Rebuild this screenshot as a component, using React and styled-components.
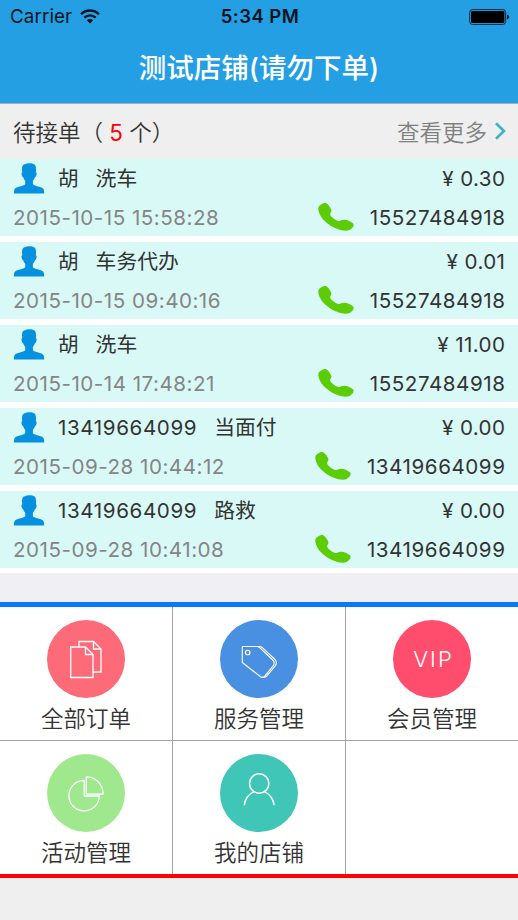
import React from 'react';
import styled, { createGlobalStyle } from 'styled-components';

const Global = createGlobalStyle`
  * { box-sizing: border-box; }
  body { margin: 0; background: #efefef; }
`;

const Screen = styled.div`
  width: 518px;
  height: 920px;
  overflow: hidden;
  display: flex;
  flex-direction: column;
  background: #efefef;
  color: #333;
  font-family: Inter, "Noto Sans CJK SC", sans-serif;
  white-space: pre;
`;

const Header = styled.header`
  flex: none;
  height: 104px;
  background: #259fe3;
  border-bottom: 1px solid #9faeb8;
`;

const StatusBar = styled.div`
  height: 33px;
  display: grid;
  grid-template-columns: 1fr auto 1fr;
  align-items: center;
  padding: 0 8px 0 10px;
  color: #06141d;
  font-size: 18.8px;
  line-height: 33px;
`;

const Carrier = styled.div`
  display: flex;
  align-items: center;
  gap: 8px;
  letter-spacing: 0.1px;
`;

const Clock = styled.div`
  font-weight: 600;
  font-size: 18.5px;
  letter-spacing: 0.45px;
`;

const BatterySlot = styled.div`
  display: flex;
  justify-content: flex-end;
`;

const Title = styled.h1`
  margin: 0;
  height: 70px;
  line-height: 71px;
  text-align: center;
  color: #fff;
  font-size: 27.5px;
  font-weight: 500;
`;

const SectionHead = styled.div`
  flex: none;
  height: 55px;
  padding: 0 11px 2px 13px;
  display: flex;
  align-items: center;
  justify-content: space-between;
  font-size: 22.5px;
  font-weight: 350;
`;

const Count = styled.span`
  color: #f00;
  font-weight: 400;
`;

const More = styled.div`
  display: flex;
  align-items: center;
  gap: 7px;
  color: #808080;
`;

const Orders = styled.div`
  flex: none;
  height: 414px;
  display: grid;
  grid-auto-rows: 77px;
  row-gap: 6px;
  background: #fff;
`;

const Order = styled.article`
  background: #d9f9f6;
  padding: 0 13px;
  font-size: 20.6px;
  font-weight: 380;
`;

const Line = styled.div`
  height: ${(p) => p.$h}px;
  display: flex;
  align-items: center;
  justify-content: space-between;
`;

const Customer = styled.div`
  display: flex;
  align-items: center;
`;

const Name = styled.span`
  margin-left: 13px;
  ${(p) => (p.$numeric ? 'letter-spacing: 0.6px;' : 'padding-bottom: 3px;')}
`;

const Service = styled.span`
  margin-left: 17px;
  padding-bottom: 3px;
  font-size: 20.8px;
`;

const Price = styled.span`
  letter-spacing: 0.4px;
  margin-right: -0.4px;
`;

const Stamp = styled.time`
  color: #858585;
  letter-spacing: 0.5px;
`;

const Phone = styled.div`
  display: flex;
  align-items: center;
  gap: 16px;
  letter-spacing: 0.55px;
  margin-right: -0.5px;
`;

const Spacer = styled.div`
  flex: none;
  height: 29px;
  background: #efeff4;
`;

const Menu = styled.nav`
  flex: none;
  height: 276px;
  display: grid;
  grid-template-columns: 172px 172px 172px;
  grid-template-rows: 133px 133px;
  gap: 1px;
  background: #a2a2a2;
  border-top: 5px solid #0a78fb;
  border-bottom: 4px solid #f00;
`;

const Tile = styled.div`
  background: #fff;
  display: flex;
  flex-direction: column;
  align-items: center;
  padding-top: 13px;
  font-size: 22.5px;
  font-weight: 350;
  line-height: 42px;
`;

const Disc = styled.div`
  flex: none;
  width: 78px;
  height: 78px;
  border-radius: 50%;
  background: ${(p) => p.$color};
  display: flex;
  align-items: center;
  justify-content: center;
`;

const Vip = styled.span`
  color: #fff;
  font-size: 22px;
  font-weight: 300;
  letter-spacing: 2px;
  margin-right: -3px;
`;

const Wifi = () => (
  <svg width="20" height="15" viewBox="0 0 20 15" fill="none" stroke="#06141d" strokeWidth="2.3">
    <path d="M1 5.2a12.8 12.8 0 0 1 18 0" />
    <path d="M4.4 8.6a8 8 0 0 1 11.2 0" />
    <path d="M10 14.4 6.8 11.2a4.6 4.6 0 0 1 6.4 0Z" fill="#06141d" stroke="none" />
  </svg>
);

const Battery = () => (
  <svg width="41" height="16" viewBox="0 0 41 16">
    <rect x="0.7" y="0.6" width="36" height="14.8" rx="2.8" fill="none" stroke="#0b2b3e" strokeWidth="1" />
    <rect x="2" y="1.9" width="33.4" height="12.2" rx="1.4" fill="#000" />
    <path d="M38 5.4q2.2.7 2.2 2.6T38 10.6Z" fill="#06141d" />
  </svg>
);

const Chevron = () => (
  <svg width="13" height="18" viewBox="0 0 13 18" fill="none" stroke="#3fb2c6" strokeWidth="2.6">
    <path d="M2 1.2 10 9 2 16.8" />
  </svg>
);

const Person = () => (
  <svg width="32" height="31" viewBox="0 0 32 31" fill="#0591e0">
    <path d="M9 5.2C9 2.8 10.3 1.4 12 1.2 14.3-.2 19.2-.2 21.5 1.4 23 2.5 23.2 5 22.9 9.2c1 .3.9 1.7.3 3.3-.3 1-.7 1.6-1.2 1.6-.5 1.8-1.3 2.900-2.100 3.900v3.200c1.500 2.300 9.200 2.200 10.700 5 .5 1.100.6 2.500.6 4.300H.900c0-1.800.1-3.200.600-4.300 1.500-2.800 9.200-2.700 10.700-5V18c-.8-1-1.600-2.100-2.100-3.900-.5 0-.9-.6-1.200-1.600-.6-1.600-.7-3 .3-3.300Z" />
  </svg>
);

const Handset = () => (
  <svg width="36" height="28" viewBox="0 0 36 28" fill="#5bcc05">
    <path d="M.3 5.2C.3 2.5 5.400-.5 7.800.1 9.600.8 12 4 13.200 6.500c.9 2.100-1.400 3.400-1 5.200.6 2 4.800 5.300 8 6.200 2.600.6 3.300-1.200 6-1.100 2.800.2 6.500 1.500 8.700 3.500 2.100 2.200-.7 5.500-3.400 6.700-2.400 1.100-7.400.8-11.800-.9C12.400 23.400 5.800 18.200 2.800 13.200 1.200 10.500.2 7.300.3 5.200Z" />
  </svg>
);

const line = { fill: 'none', stroke: '#fff', strokeWidth: 1.3 };

const Papers = () => (
  <svg width="78" height="78" viewBox="0 0 78 78" {...line}>
    <path d="M32 27V21.500h14.500l7.500 7.500V52h-8" />
    <path d="M46.500 21.500V29H54" />
    <path d="M23.700 27h14.800l7.500 7.500v23H23.700Z" />
    <path d="M38.500 27v7.500H46" />
  </svg>
);

const Tags = () => (
  <svg width="78" height="78" viewBox="0 0 78 78" strokeLinejoin="round" {...line} strokeWidth="1.100">
    <path d="M23 26.500h13.500q2 0 3.500 1.300L52.300 39.500q3.500 3.200.7 6.500l-8 9.800q-2.500 3.200-5.700 0L22.300 42.500V27.200q0-.7.7-.7Z" />
    <path d="M37 26.500h2.500q1.500 0 2.800 1.200L55 39.500q2.700 3.200.2 6.300l-8.500 10.400q-1.500 1.600-4.200 1.200" />
    <circle cx="27.700" cy="32.500" r="2.300" />
  </svg>
);

const Pie = () => (
  <svg width="78" height="78" viewBox="0 0 78 78" {...line}>
    <path d="M37.200 26.500A15.200 15.200 0 1 0 52.300 42H37.200Z" />
    <path d="M39.300 22.800A16.700 16.700 0 0 1 56 40.200H39.300Z" />
  </svg>
);

const Owner = () => (
  <svg width="78" height="78" viewBox="0 0 78 78" {...line} strokeWidth="1.500">
    <circle cx="39.200" cy="29.500" r="9.700" />
    <path d="M24.300 51.300c.4-5.800 4.200-11.300 9.500-13.400M54.100 51.300c-.4-5.800-4.200-11.300-9.500-13.400" />
  </svg>
);

const orders = [
  { name: '胡', service: '洗车', price: '0.30', at: '2015-10-15 15:58:28', phone: '15527484918' },
  { name: '胡', service: '车务代办', price: '0.01', at: '2015-10-15 09:40:16', phone: '15527484918' },
  { name: '胡', service: '洗车', price: '11.00', at: '2015-10-14 17:48:21', phone: '15527484918' },
  { name: '13419664099', service: '当面付', price: '0.00', at: '2015-09-28 10:44:12', phone: '13419664099' },
  { name: '13419664099', service: '路救', price: '0.00', at: '2015-09-28 10:41:08', phone: '13419664099' },
];

const tiles = [
  { label: '全部订单', color: '#fd6b78', icon: <Papers /> },
  { label: '服务管理', color: '#4a90e2', icon: <Tags /> },
  { label: '会员管理', color: '#ff4d6e', icon: <Vip>VIP</Vip> },
  { label: '活动管理', color: '#9fe88d', icon: <Pie /> },
  { label: '我的店铺', color: '#3fc6b7', icon: <Owner /> },
];

export default function App() {
  return (
    <Screen>
      <Global />
      <Header>
        <StatusBar>
          <Carrier>Carrier<Wifi /></Carrier>
          <Clock>5:34 PM</Clock>
          <BatterySlot><Battery /></BatterySlot>
        </StatusBar>
        <Title>测试店铺(请勿下单)</Title>
      </Header>
      <SectionHead>
        <div>待接单（ <Count>5</Count> 个）</div>
        <More>查看更多<Chevron /></More>
      </SectionHead>
      <Orders>
        {orders.map((o) => (
          <Order key={o.at}>
            <Line $h={39}>
              <Customer>
                <Person />
                <Name $numeric={o.name.length > 1}>{o.name}</Name>
                <Service>{o.service}</Service>
              </Customer>
              <Price>¥ {o.price}</Price>
            </Line>
            <Line $h={38}>
              <Stamp>{o.at}</Stamp>
              <Phone><Handset />{o.phone}</Phone>
            </Line>
          </Order>
        ))}
      </Orders>
      <Spacer />
      <Menu>
        {tiles.map((t) => (
          <Tile key={t.label}>
            <Disc $color={t.color}>{t.icon}</Disc>
            {t.label}
          </Tile>
        ))}
        <Tile />
      </Menu>
    </Screen>
  );
}
